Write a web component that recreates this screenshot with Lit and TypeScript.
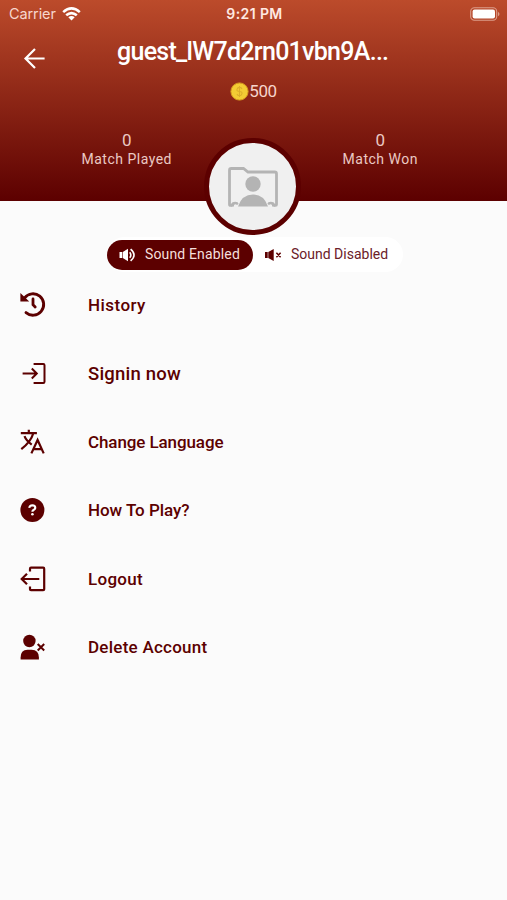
import { LitElement, html, css, svg } from "lit";
import { customElement, property } from "lit/decorators.js";

const icons: Record<string, unknown> = {
  back: svg`<path d="M22.6 12.5H4M13 3L3.5 12.5 13 22" fill="none" stroke="currentColor" stroke-width="2.2"/>`,
  history: svg`<path d="M4.6 6A10.7 10.7 0 1 1 6 20.8" transform="translate(0 -.2)" fill="none" stroke="currentColor" stroke-width="2.9" stroke-linecap="round"/><path d="M.4 1v8.6h8.8z" fill="currentColor"/><path d="M13 7V12.7L15.2 15" fill="none" stroke="currentColor" stroke-width="2.8" stroke-linecap="round"/>`,
  signin: svg`<path d="M13.6 3H23.3Q24.5 3 24.5 4.2V20.7Q24.5 21.9 23.3 21.9H13.6M2.6 12.5H16.2M11.8 7.5l5 5-5 5" fill="none" stroke="currentColor" stroke-width="2"/>`,
  language: svg`<path d="M.8 4.2H16.9M8.8.8V4.2M13.3 4.2C11.8 9.5 6.8 15.8 1.3 20.1M4.5 7.2C5.8 10.7 9.1 13.7 11.7 15.7M11.4 24.4L17.6 11 23.7 24.4M13.4 20.1H21.7" fill="none" stroke="currentColor" stroke-width="2.2"/>`,
  help: svg`<circle cx="12.4" cy="12.9" r="12" fill="currentColor"/><path d="M9.5 10.9Q9.4 8.4 12.4 8.4T15.2 10.9Q15.2 11.9 13.8 12.8 12.4 13.5 12.4 14.7" fill="none" stroke="#fff" stroke-width="2.2"/><circle cx="12.4" cy="17.3" r="1.3" fill="#fff"/>`,
  logout: svg`<path d="M10 5.5V2.7Q10 1.7 11 1.7H23.2Q24.2 1.7 24.2 2.7V23.2Q24.2 24.2 23.2 24.2H11Q10 24.2 10 23.2V20.5M19.3 13H2.4M7 7.7L1.7 13l5.3 5.3" fill="none" stroke="currentColor" stroke-width="2.2"/>`,
  remove: svg`<circle cx="9.4" cy="7" r="6.2" fill="currentColor"/><path d="M.6 25.4V23.5Q.6 16 7.5 15.8h4Q18.9 16 18.9 23.5V25.4Z" fill="currentColor"/><path d="M17.7 10l6.5 6.5M24.2 10l-6.5 6.5" stroke="currentColor" stroke-width="2"/>`,
};

@customElement("line-icon")
class LineIcon extends LitElement {
  @property() name = "back";
  static styles = css`
    :host { display: block; width: 26px; height: 26px; }
    svg { display: block; width: 100%; height: 100%; overflow: visible; }
  `;
  render() {
    return html`<svg viewBox="0 0 26 26">${icons[this.name]}</svg>`;
  }
}

interface Item { icon: string; label: string; size: number; spacing: number }

const items: Item[] = [
  { icon: "history", label: "History", size: 17, spacing: 0.45 },
  { icon: "signin", label: "Signin now", size: 18.5, spacing: 0.2 },
  { icon: "language", label: "Change Language", size: 17, spacing: -0.1 },
  { icon: "help", label: "How To Play?", size: 17, spacing: -0.05 },
  { icon: "logout", label: "Logout", size: 17, spacing: 0.3 },
  { icon: "remove", label: "Delete Account", size: 17, spacing: 0.25 },
];

@customElement("app-root")
class AppRoot extends LitElement {
  static styles = css`
    :host { display: block; width: 507px; height: 900px; overflow: hidden; background: #fbfbfb; color: #5c0000; font-family: Roboto, sans-serif; }
    * { box-sizing: border-box; }
    svg { display: block; overflow: visible; }
    header { height: 200.5px; background: linear-gradient(#bc4b2b, #5c0000); color: #fff; }
    .status { height: 27px; padding: 0 7px 0 9px; display: grid; grid-template-columns: 1fr auto 1fr; align-items: center; font: 14.5px Inter, sans-serif; }
    .carrier { display: flex; align-items: center; gap: 6px; color: #f7d6cd; }
    .carrier span { letter-spacing: -0.1px; }
    .time { font-weight: 600; font-size: 14px; color: #ffe9e2; letter-spacing: 0.4px; }
    .battery { justify-self: end; }
    .title { height: 49px; display: grid; grid-template-columns: 117px 1fr; align-items: center; }
    .title line-icon { margin: 14px 0 0 21.5px; }
    h1 { margin: 0; font-size: 25px; line-height: 30px; font-weight: 500; white-space: nowrap; letter-spacing: -0.72px; }
    .coins { height: 30px; display: flex; justify-content: center; align-items: center; font-size: 17px; color: #f6d5cc; }
    .coins span { letter-spacing: -0.4px; }
    .stats { display: flex; justify-content: space-between; padding: 25px 0 0; }
    .stat { width: 254px; text-align: center; font-size: 14px; line-height: 19px; color: #ebc9c3; letter-spacing: 0.5px; }
    .stat b { display: block; font-weight: 400; font-size: 17px; letter-spacing: 0; }
    .avatar { width: 97px; height: 97px; margin: -62.5px 0 0 204px; position: relative; border-radius: 50%; border: 5.5px solid #5c0000; background: #f0f0f0; display: grid; place-items: center; }
    .sound { width: 296px; height: 35px; margin: 2px 0 0 107px; padding: 3px 0; background: #fff; border-radius: 18px; display: flex; font-size: 14px; line-height: 29px; }
    .option { display: flex; align-items: center; height: 29.5px; width: 146px; padding-left: 12px; gap: 9px; border-radius: 15px; white-space: nowrap; letter-spacing: 0.15px; }
    .option + .option { letter-spacing: 0; color: #6b2028; }
    .option.on { background: #5c0000; color: #f4dfdc; }
    .list { margin: -1px 0 0; padding: 0; list-style: none; }
    .item { height: 68.4px; display: grid; grid-template-columns: 68px 1fr; align-items: center; padding-left: 20px; font-weight: 500; white-space: nowrap; }
  `;

  render() {
    return html`
      <header>
        <div class="status">
          <div class="carrier"><span>Carrier</span>
            <svg width="19" height="14" viewBox="0 0 19 14" fill="none" stroke="#fff" stroke-width="2.6"><path d="M1.2 5.1Q9.5-2.3 17.8 5.1M4.2 8.3Q9.5 3.8 14.8 8.3"/><path d="M6.3 10.2Q9.5 7.6 12.7 10.2L9.5 13.5Z" fill="#fff" stroke="none"/></svg>
          </div>
          <span class="time">9:21 PM</span>
          <svg class="battery" width="30" height="14" viewBox="0 0 30 14"><rect x=".7" y=".7" width="26" height="12.6" rx="3.7" fill="none" stroke="#dc9d8b" stroke-width="1.1"/><rect x="2.6" y="2.5" width="22.4" height="9" rx="2" fill="#fff"/><path d="M28 4.7Q31 7 28 9.3Z" fill="#dc9d8b"/></svg>
        </div>
        <div class="title"><line-icon name="back"></line-icon><h1>guest_lW7d2rn01vbn9A...</h1></div>
        <div class="coins">
          <svg width="19" height="19" viewBox="0 0 19 19"><circle cx="9.5" cy="9.5" r="8.6" fill="#f3cc34" stroke="#d99e1e"/><path d="M12 7Q11.5 5.4 9.5 5.4T7 7.4 9.5 9.5 12 11.7 9.5 13.7 7 12M9.5 4v11" fill="none" stroke="#dcae2b" stroke-width="1.1"/></svg>
          <span>500</span>
        </div>
        <div class="stats">
          <div class="stat"><b>0</b><span>Match Played</span></div>
          <div class="stat"><b>0</b><span>Match Won</span></div>
        </div>
      </header>
      <div class="avatar">
        <svg width="50" height="40" viewBox="0 0 50 40"><path d="M4.5 38.4H2.5Q1.5 38.4 1.5 37.4V3.3Q1.5 1.5 3.3 1.5H15.5L20 5H46.7Q48.5 5 48.5 6.8V37.4Q48.5 38.4 47.5 38.4H45.5" fill="none" stroke="#b4b4b4" stroke-width="2.8"/><circle cx="25" cy="17" r="7.7" fill="#b4b4b4"/><path d="M10 39.5Q14 27.5 25 27.5T40 39.5ZM3 39.5V37Q4 34.7 7.2 34.7T10.5 37L9 38Q7.5 36.5 6 38V39.5ZM47 39.5V37Q46 34.7 42.8 34.7T39.5 37L41 38Q42.5 36.5 44 38V39.5Z" fill="#b4b4b4"/></svg>
      </div>
      <div class="sound">
        <div class="option on">
          <svg width="17" height="14" viewBox="0 0 17 14"><path d="M.5 4H3.2V10H.5ZM3.8 4L9 .7V13.3L3.8 10Z" fill="#fff"/><path d="M10.7 4.2Q13 7 10.7 9.8M11.6 1.2Q18.5 7 11.6 12.8" fill="none" stroke="#fff" stroke-width="1.6"/></svg>
          <span>Sound Enabled</span>
        </div>
        <div class="option">
          <svg width="17" height="14" viewBox="0 0 17 14"><path d="M0 4H2.7V10H0ZM3.3 4L8.7.9V13.1L3.3 10Z" fill="#5c0000"/><path d="M11.4 4.8l4.2 4.4M15.6 4.8l-4.2 4.4" stroke="#5c0000" stroke-width="1.5"/></svg>
          <span>Sound Disabled</span>
        </div>
      </div>
      <ul class="list">
        ${items.map((i) => html`<li class="item"><line-icon name=${i.icon}></line-icon><span style="font-size:${i.size}px;letter-spacing:${i.spacing}px">${i.label}</span></li>`)}
      </ul>
    `;
  }
}
